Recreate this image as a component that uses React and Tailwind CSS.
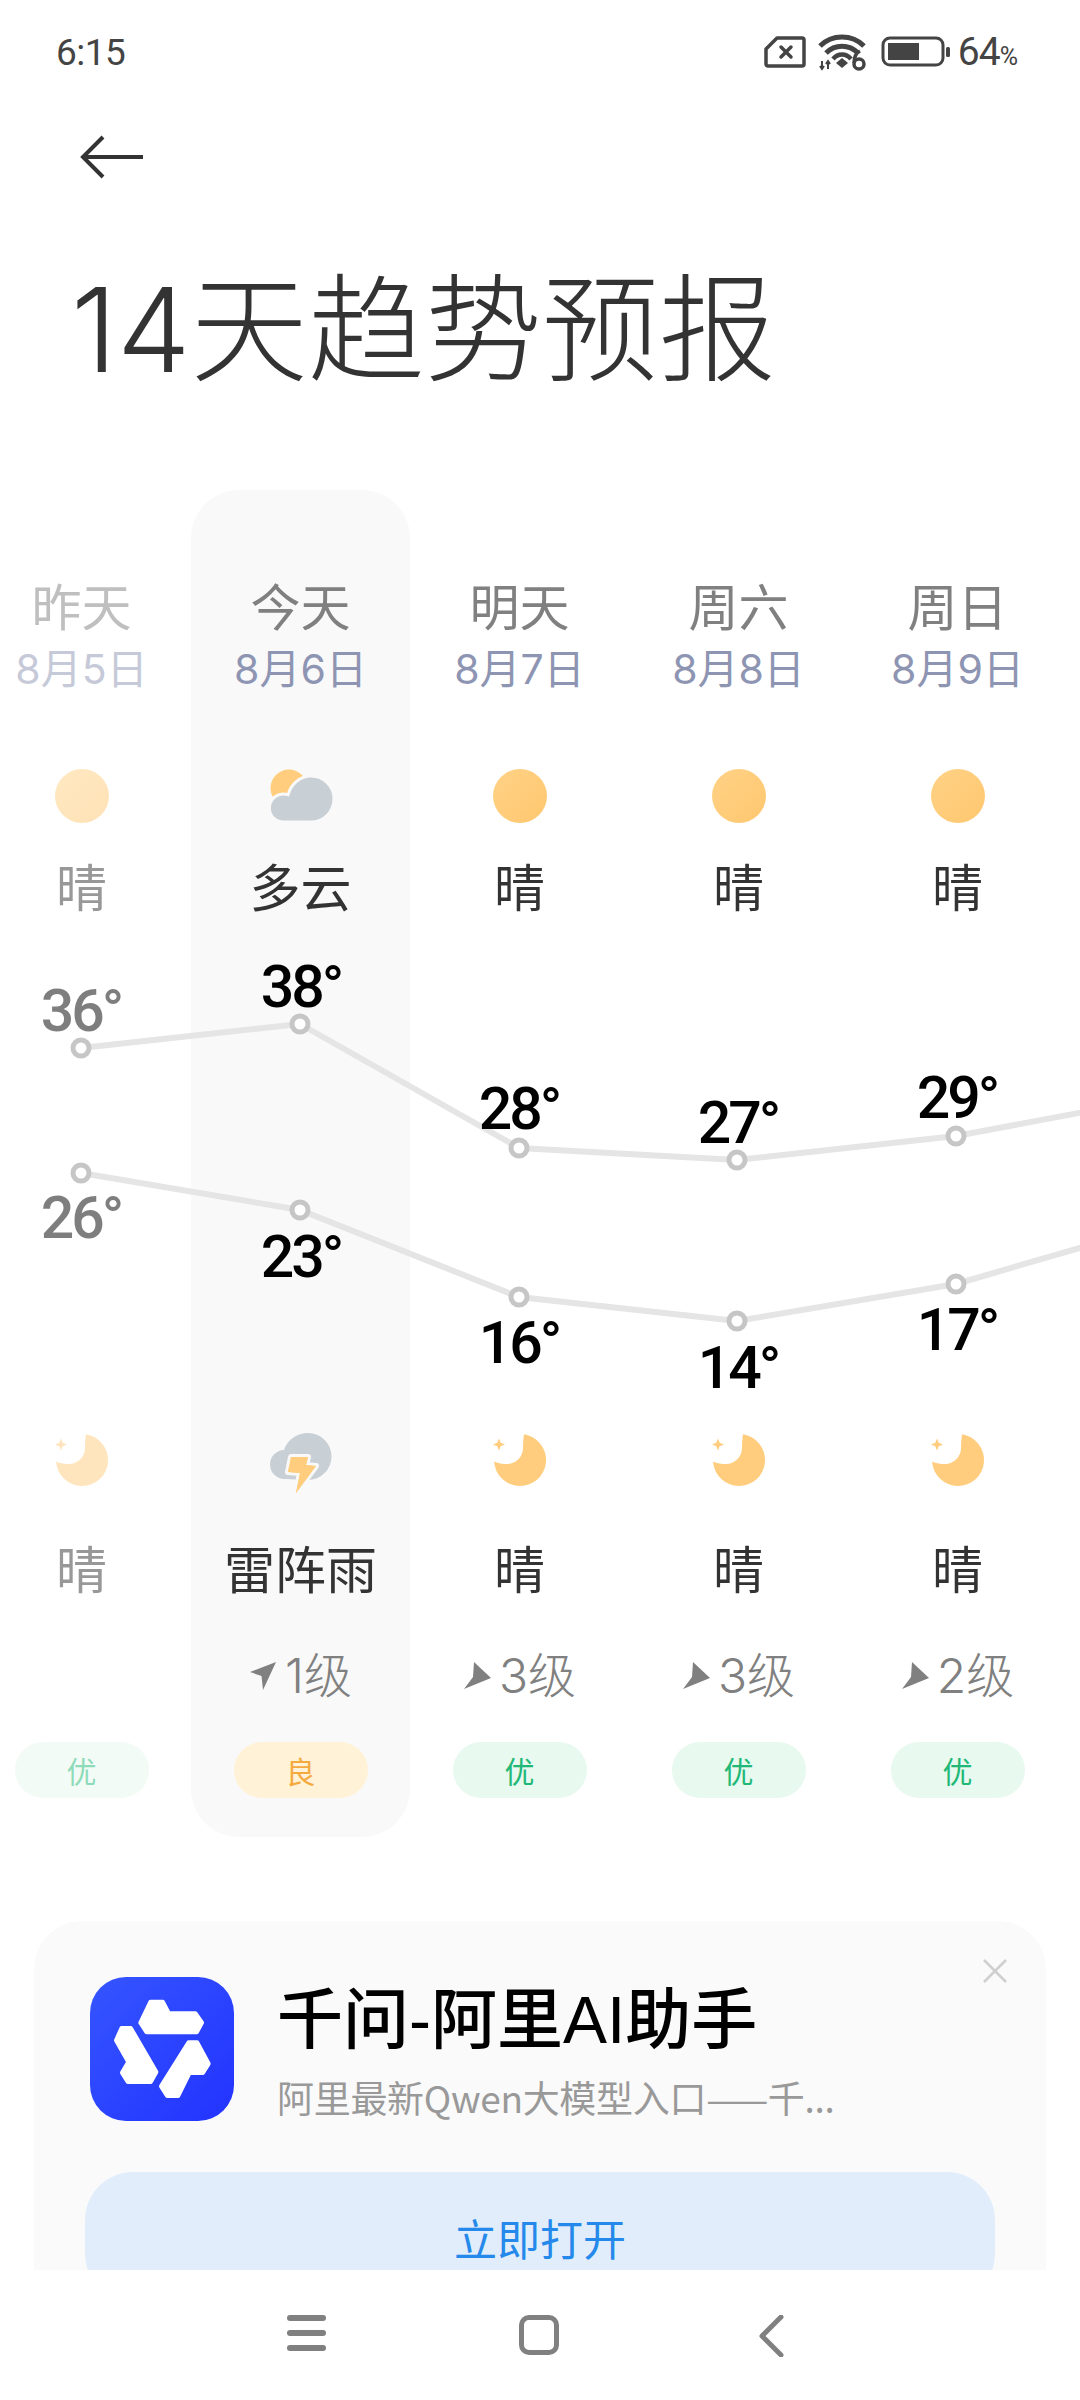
const cjk = { fontFamily: '"Noto Sans CJK SC", sans-serif' };
const mixed = { fontFamily: 'Inter, "Noto Sans CJK SC", sans-serif' };
const roboto = { fontFamily: 'Roboto, sans-serif' };

function Sun() {
  return (
    <svg width="64" height="64" viewBox="0 0 64 64">
      <defs>
        <linearGradient id="sung" x1="0" y1="0" x2="1" y2="1">
          <stop offset="0" stopColor="#ffd286" />
          <stop offset="1" stopColor="#ffc76f" />
        </linearGradient>
      </defs>
      <circle cx="32" cy="32" r="27" fill="url(#sung)" />
    </svg>
  );
}

function Moon() {
  return (
    <svg width="64" height="64" viewBox="0 0 64 64">
      <path d="M36 6.300A26 26 0 1 1 6.100 33.500C10 35.500 15 36 19 36A16 16 0 0 0 35 20C35 15 35.500 10 36 6.300Z" fill="#ffcd7d" />
      <path d="M11 10.500L12.700 14.800L17 16.500L12.700 18.200L11 22.500L9.300 18.200L5 16.500L9.300 14.800Z" fill="#ffcd7d" />
    </svg>
  );
}

function CloudSun() {
  return (
    <svg width="64" height="64" viewBox="268 764 64 64">
      <circle cx="288" cy="788" r="18.500" fill="#ffcd7d" />
      <path d="M282 822a14 14 0 0 1-2-27.800c2-.5 5-.2 7 .5C290 784 299 776 310 776a23 23 0 0 1 0 46Z" fill="#c8cfd5" stroke="#f9f9fa" strokeWidth="3" />
    </svg>
  );
}

function CloudBolt() {
  return (
    <svg width="64" height="68" viewBox="268 1428 64 68">
      <path d="M284 1479a14.500 14.500 0 0 1-1-29c3-10 13-17 24-17a23.500 23.500 0 0 1 0 47Z" fill="#c8cfd5" />
      <path d="M290 1457L307 1457L305 1465L315 1466L295 1493L299 1473L287 1472Z" fill="#ffcd7d" stroke="#f9f9fa" strokeWidth="6" strokeLinejoin="round" paintOrder="stroke" />
      <path d="M290 1457L307 1457L305 1465L315 1466L295 1493L299 1473L287 1472Z" fill="#ffcd7d" strokeLinejoin="round" />
    </svg>
  );
}

function WindArrow({ kind }) {
  if (kind === 'ne') {
    return (
      <svg width="28" height="30" viewBox="0 0 28 30" className="shrink-0">
        <path d="M27 1L14 29L12.500 15L1 11Z" fill="#808080" />
      </svg>
    );
  }
  return (
    <svg width="28" height="30" viewBox="0 0 28 30" className="shrink-0">
      <path d="M11 1L28 17L1 28L10 16Z" fill="#808080" />
    </svg>
  );
}

const days = [
  { name: '昨天', date: '8月5日', icon: Sun, w: '晴', nIcon: Moon, nw: '晴', wind: null, aqi: '优', faded: true },
  { name: '今天', date: '8月6日', icon: CloudSun, w: '多云', nIcon: CloudBolt, nw: '雷阵雨', wind: '1级', arrow: 'ne', aqi: '良', today: true },
  { name: '明天', date: '8月7日', icon: Sun, w: '晴', nIcon: Moon, nw: '晴', wind: '3级', arrow: 'e', aqi: '优' },
  { name: '周六', date: '8月8日', icon: Sun, w: '晴', nIcon: Moon, nw: '晴', wind: '3级', arrow: 'e', aqi: '优' },
  { name: '周日', date: '8月9日', icon: Sun, w: '晴', nIcon: Moon, nw: '晴', wind: '2级', arrow: 'e', aqi: '优' },
];

const xs = [81, 300, 519, 737, 956];
const highs = [1048, 1024, 1148, 1160, 1136];
const lows = [1173, 1210, 1297, 1321, 1284];
const labels = [
  { x: 81, y: 1010, t: '36°', faded: true },
  { x: 301, y: 986, t: '38°' },
  { x: 519, y: 1108, t: '28°' },
  { x: 738, y: 1122, t: '27°' },
  { x: 957, y: 1097, t: '29°' },
  { x: 81, y: 1217, t: '26°', faded: true },
  { x: 301, y: 1256, t: '23°' },
  { x: 519, y: 1342, t: '16°' },
  { x: 738, y: 1367, t: '14°' },
  { x: 957, y: 1329, t: '17°' },
];

function Column({ d }) {
  const Icon = d.icon;
  const NIcon = d.nIcon;
  return (
    <div className={`flex h-[1347px] w-[219px] shrink-0 flex-col items-center rounded-[48px] pt-[84px] ${d.today ? 'bg-[#f9f9fa]' : ''}`}>
      <div className={`flex w-full flex-col items-center ${d.faded ? 'opacity-50' : ''}`}>
        <div className="flex h-[60px] items-center text-[50px] leading-none text-[#808080]" style={cjk}>{d.name}</div>
        <div className="flex h-[70px] items-center text-[41px] leading-none text-[#8e95b3]" style={mixed}>{d.date}</div>
        <div className="mt-[60px] flex h-[64px] items-center justify-center"><Icon /></div>
        <div className="mt-[27px] flex h-[60px] items-center text-[51px] leading-none text-[#333333]" style={cjk}>{d.w}</div>
        <div className="h-[513px]" />
        <div className="flex h-[64px] items-start justify-center"><NIcon /></div>
        <div className="mt-[45px] flex h-[60px] items-center text-[51px] leading-none text-[#333333]" style={cjk}>{d.nw}</div>
        <div className="mt-[49px] flex h-[60px] items-center gap-[8px] text-[48px] font-light leading-none text-[#808080]" style={mixed}>
          {d.wind && <WindArrow kind={d.arrow} />}
          {d.wind}
        </div>
        <div className={`mt-[36px] flex h-[56px] w-[134px] items-center justify-center rounded-full text-[30px] leading-none ${d.today ? 'bg-[#fff2d6] text-[#f5aa40]' : 'bg-[#e8f9ef] text-[#1fb877]'}`} style={cjk}>
          {d.aqi}
        </div>
      </div>
    </div>
  );
}

function Chart() {
  const hi = xs.map((x, i) => `${x},${highs[i]}`).join(' ') + ' 1175,1095';
  const lo = xs.map((x, i) => `${x},${lows[i]}`).join(' ') + ' 1175,1220';
  return (
    <div className="absolute left-[28px] top-[426px] h-[512px] w-[1080px]">
      <svg width="1080" height="512" viewBox="0 916 1080 512" className="absolute inset-0">
        <polyline points={hi} fill="none" stroke="#e5e5e5" strokeWidth="6" />
        <polyline points={lo} fill="none" stroke="#e5e5e5" strokeWidth="6" />
        {[...highs, ...lows].map((y, i) => (
          <circle key={i} cx={xs[i % 5]} cy={y} r="8" fill="#ffffff" stroke="#c6c6c6" strokeWidth="5" />
        ))}
      </svg>
      {labels.map((l) => (
        <div
          key={l.t}
          className={`absolute -translate-x-1/2 -translate-y-1/2 whitespace-nowrap text-[59px] font-medium leading-none tracking-[-3px] text-black ${l.faded ? 'opacity-50' : ''}`}
          style={{ ...roboto, left: l.x, top: l.y - 916 }}
        >
          {l.t}
        </div>
      ))}
    </div>
  );
}

function StatusIcons() {
  return (
    <div className="flex items-center">
      <svg width="42" height="32" viewBox="0 0 42 32" className="mr-[12px]">
        <path d="M13 2H38a2 2 0 0 1 2 2V28a2 2 0 0 1-2 2H4a2 2 0 0 1-2-2V13Z" fill="none" stroke="#444" strokeWidth="3.500" strokeLinejoin="round" />
        <path d="M17 11L27 21M27 11L17 21" stroke="#444" strokeWidth="3.500" strokeLinecap="round" />
      </svg>
      <svg width="48" height="38" viewBox="0 0 48 38" className="mr-[15px]">
        <path d="M2 13C14 1 34 1 46 13" fill="none" stroke="#444" strokeWidth="5" />
        <path d="M8 20C17 11 31 11 40 20" fill="none" stroke="#444" strokeWidth="5" />
        <path d="M15 26C20 20 28 20 33 26" fill="none" stroke="#444" strokeWidth="4.500" />
        <path d="M24 25L30 30L24 35L18 30Z" fill="#444" />
        <path d="M4 28V35M2 33L4 36L6 33M10 36V29M8 31L10 28L12 31" stroke="#444" strokeWidth="2" fill="none" />
        <circle cx="41" cy="31" r="5" fill="none" stroke="#444" strokeWidth="3.500" />
        <path d="M36 30C36 24 38 20 42 18" fill="none" stroke="#444" strokeWidth="3.500" />
      </svg>
      <svg width="70" height="32" viewBox="0 0 70 32" className="mr-[7px]">
        <rect x="2" y="2" width="60" height="27" rx="7" fill="none" stroke="#444" strokeWidth="3" />
        <rect x="7" y="7" width="31" height="17" fill="#444" />
        <rect x="65" y="11" width="4" height="10" rx="1.500" fill="#444" />
      </svg>
      <span className="text-[39px] leading-none tracking-[-1px] text-[#444444]" style={roboto}>64<span className="text-[25px]">%</span></span>
    </div>
  );
}

function QwenLogo() {
  return (
    <svg width="144" height="144" viewBox="0 0 432 432" className="shrink-0 rounded-[36px]">
      <defs>
        <linearGradient id="qw" x1="0" y1="0" x2="1" y2="1">
          <stop offset="0" stopColor="#3555ff" />
          <stop offset="1" stopColor="#2233ff" />
        </linearGradient>
      </defs>
      <rect width="432" height="432" fill="url(#qw)" />
      <g fill="#ffffff" stroke="#ffffff" strokeWidth="14" strokeLinejoin="round">
        <path d="M182 75L218 75L236 110L316 110L335 137L320 165L170 165L152 137Z" />
        <path d="M95 154L122 154L198 285L182 314L114 314L97 287L116 255L79 190Z" />
        <path d="M296 197L321 197L355 260L338 287L298 287L264 356L232 356L214 328Z" />
      </g>
    </svg>
  );
}

function AdCard() {
  return (
    <div className="relative mx-[34px] mt-[84px] rounded-[48px] bg-[#fafafa] pt-[56px] pb-[40px]">
      <svg width="26" height="26" viewBox="0 0 26 26" className="absolute right-[38px] top-[37px]">
        <path d="M2 2L24 24M24 2L2 24" stroke="#cfcfcf" strokeWidth="2.500" />
      </svg>
      <div className="flex gap-[43px] pl-[56px]">
        <QwenLogo />
        <div className="flex flex-col pt-[3px]">
          <div className="flex h-[80px] items-center text-[66px] font-medium leading-none text-black" style={{ fontFamily: '"Liberation Sans", "Noto Sans CJK SC", sans-serif' }}>千问-阿里AI助手</div>
          <div className="mt-[7px] flex h-[60px] items-center text-[37px] leading-none tracking-[-0.3px] text-[#999999]" style={cjk}>阿里最新Qwen大模型入口——千...</div>
        </div>
      </div>
      <div className="mx-[51px] mt-[45px] flex h-[130px] items-center justify-center rounded-[48px] bg-[#e1edfa] text-[43px] leading-none text-[#2489ea]" style={cjk}>
        立即打开
      </div>
    </div>
  );
}

export default function App() {
  return (
    <div className="flex h-[2400px] w-[1080px] flex-col overflow-hidden bg-white">
      <div className="flex h-[2270px] flex-col overflow-hidden">
        <div className="flex h-[104px] shrink-0 items-center justify-between pl-[56px] pr-[63px]">
          <span className="text-[37px] leading-none tracking-[-0.5px] text-[#444444]" style={roboto}>6:15</span>
          <StatusIcons />
        </div>
        <div className="flex h-[106px] shrink-0 items-center pl-[80px]">
          <svg width="64" height="44" viewBox="0 0 64 44">
            <path d="M63 22H3M23 2L3 22L23 42" fill="none" stroke="#333333" strokeWidth="4" strokeLinejoin="miter" />
          </svg>
        </div>
        <div className="flex h-[234px] shrink-0 items-center pl-[71px] pt-[5px] text-[117px] font-light leading-none text-[#333333]" style={mixed}>14天趋势预报</div>
        <div className="relative ml-[-28px] mt-[46px] flex w-[1108px] shrink-0">
          {days.map((d) => <Column key={d.name} d={d} />)}
          <Chart />
        </div>
        <AdCard />
      </div>
      <div className="flex h-[130px] shrink-0 items-start bg-white pt-[45px]">
        <div className="ml-[287px] flex h-[36px] w-[39px] flex-col justify-between">
          <div className="h-[6px] rounded-full bg-[#808080]" />
          <div className="h-[6px] rounded-full bg-[#808080]" />
          <div className="h-[6px] rounded-full bg-[#808080]" />
        </div>
        <div className="ml-[193px] h-[40px] w-[40px] rounded-[10px] border-[5px] border-[#808080]" />
        <svg width="26" height="42" viewBox="0 0 26 42" className="ml-[199px]">
          <path d="M23 2L4 21L23 40" fill="none" stroke="#808080" strokeWidth="5" strokeLinecap="round" strokeLinejoin="round" />
        </svg>
      </div>
    </div>
  );
}
